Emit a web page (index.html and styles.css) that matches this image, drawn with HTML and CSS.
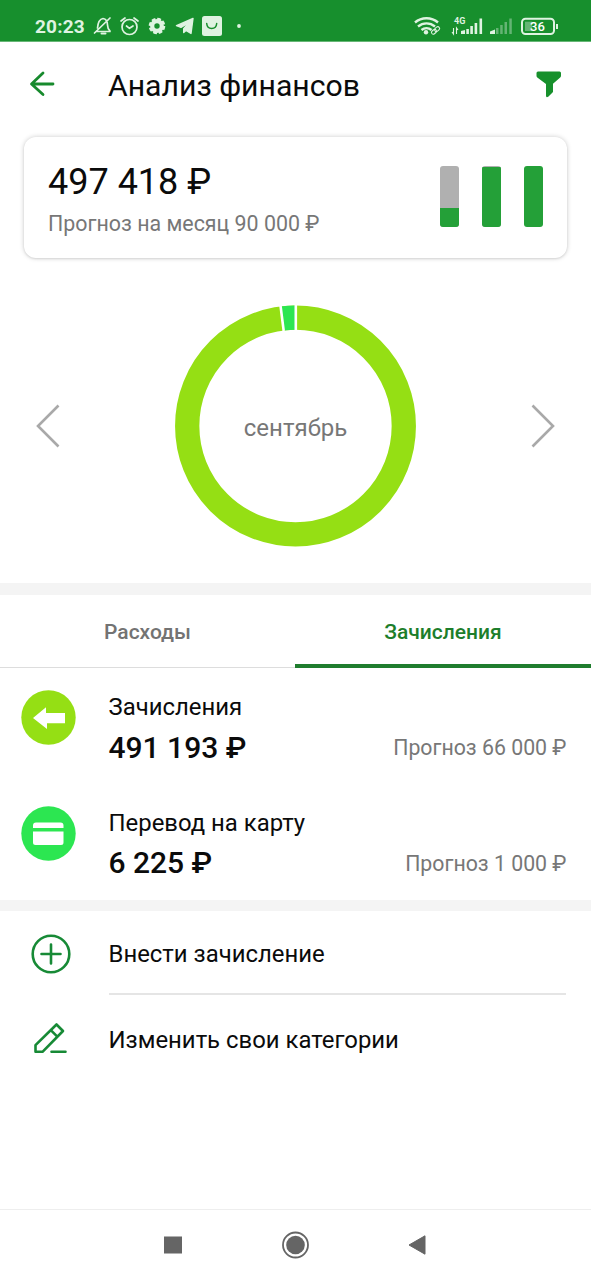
FILE: index.html
```html
<!DOCTYPE html>
<html lang="ru">
<head>
<meta charset="utf-8">
<title>Анализ финансов</title>
<link rel="stylesheet" href="styles.css">
</head>
<body>
<div class="screen">
  <div class="status-bar">
    <span class="clock">20:23</span>
    <svg class="status-left" width="156" height="26" viewBox="90 13 156 26" fill="none" stroke="#dff3e1" stroke-width="1.7" stroke-linecap="round" stroke-linejoin="round">
      <path d="M96.500 31.500h13.500M97.500 28c.5-6 2-9 5.500-9.500 3.500.5 4.500 3 4.500 6.500 0 3 .5 4 2.500 6M94.500 33L110 18"/>
      <path d="M101.500 33.600h4" stroke-width="2"/>
      <circle cx="129.500" cy="27" r="7.500"/>
      <path d="M121 21l4-3M138 21l-4-3M126.500 26l3 2.300 3.500-2.300"/>
      <circle cx="157" cy="26" r="4.800" stroke-width="4.200"/>
      <circle cx="157" cy="26" r="7" stroke-width="2.600" stroke-linecap="butt" stroke-dasharray="3.700 1.798"/>
      <path d="M193 18.500L176.500 25.700l4.500 1.700 8.500-5.200-5.800 6.400v4l2.300-2.200 5 3z" fill="#dff3e1" stroke-width="1.400"/>
      <rect x="202" y="16" width="20" height="20" rx="2.500" fill="#dff3e1" stroke="none"/>
      <path d="M206.700 23.500c.5 6.500 9.500 6.500 10 0" stroke="#178f2d" stroke-width="1.500"/>
      <circle cx="239" cy="26" r="1.900" fill="#dff3e1" stroke="none"/>
    </svg>
    <svg class="status-right" width="150" height="26" viewBox="411 13 150 26" fill="none" stroke="#dff3e1">
      <path d="M415 22.500c6.500-5.700 16.500-5.700 23 0M418 26.500c5-4.200 12-4.200 17 0M421.500 30c3-2.500 7-2.500 10 0" stroke-width="2.400"/>
      <circle cx="426" cy="32.300" r="2.200" fill="#dff3e1" stroke="none"/>
      <g transform="rotate(-40 435.500 30.500)" stroke-width="1.100"><rect x="430.800" y="28.700" width="5.500" height="3.600" rx="1.800"/><rect x="434.800" y="28.700" width="5.500" height="3.600" rx="1.800"/></g>
      <text class="network" x="454" y="23.500">4G</text>
      <path d="M453.500 28v6l-1.500-2M456.500 34v-6l1.500 2" stroke-width="1.100"/>
      <path d="M461 34v-3l4-1v4zM466.300 34v-5h2.600v5zM470.300 34v-8h2.600v8zM474.600 34V23h2.600v11zM479.500 34V18.500h2.600V34z" fill="#dff3e1" stroke="none"/>
      <path d="M490 34v-2.500l5-2V34z" fill="#dff3e1" stroke="none"/>
      <path d="M496 34v-6h2.500v6zM500.200 34v-9h2.500v9zM504.500 34V22h2.500v12zM509.300 34V18.500h2.500V34z" fill="#65b474" stroke="none"/>
      <rect x="522" y="18.800" width="32" height="15.200" rx="3.500" stroke-width="2"/>
      <rect x="525" y="21.700" width="7" height="9.300" fill="#65b474" stroke="none"/>
      <text class="battery-level" x="530" y="31.200">36</text>
      <path d="M557 24v5" stroke-width="2"/>
    </svg>
  </div>

  <header class="app-bar">
    <svg class="back" width="28" height="28" viewBox="28 71 28 28" fill="none" stroke="#178a2d" stroke-width="2.800" stroke-linecap="round" stroke-linejoin="round"><path d="M43 73L31.500 84 43 94.500M32 84h21"/></svg>
    <h1 class="title">Анализ финансов</h1>
    <svg class="filter" width="26" height="27" viewBox="536 71 26 27" fill="#17902c"><path d="M538 71.500h21.500q1.500 0 1.500 1.500v2.800q0 1-.8 1.700l-7.200 6.300v8.200l-4.500 4.600q-2.500 1.600-2.500-.8V84l-8.700-6.500q-.8-.7-.8-1.700V73q0-1.500 1.500-1.500z"/></svg>
  </header>

  <section class="summary">
    <div class="summary-text">
      <div class="summary-amount">497 418 ₽</div>
      <div class="summary-forecast">Прогноз на месяц 90 000 ₽</div>
    </div>
    <div class="bars">
      <div class="bar"><i class="fill" style="height:31%"></i></div>
      <div class="bar"><i class="fill" style="height:98%"></i></div>
      <div class="bar"><i class="fill" style="height:100%"></i></div>
    </div>
  </section>

  <section class="chart">
    <svg width="24" height="44" viewBox="0 0 24 44" fill="none" stroke="#a9a9a9" stroke-width="2.600"><path d="M22.500 1.500L2 22l20.500 20.500"/></svg>
    <svg class="donut" width="242" height="242" viewBox="-120.500 -121 242 242">
      <circle r="108.300" fill="none" stroke="#95df14" stroke-width="24.300"/>
      <path d="M-13.500-107.460A108.300 108.300 0 0 1 0-108.300" fill="none" stroke="#2ce651" stroke-width="24.300"/>
      <path d="M.3-95v-27M-11.800-95L-15.200-122" stroke="#fff" stroke-width="2.600"/>
      <text class="month" x="0" y="9.500" text-anchor="middle">сентябрь</text>
    </svg>
    <svg width="24" height="44" viewBox="0 0 24 44" fill="none" stroke="#a9a9a9" stroke-width="2.600"><path d="M1.500 1.500L22 22 1.500 42.500"/></svg>
  </section>

  <nav class="tabs">
    <div class="tab">Расходы</div>
    <div class="tab tab-active">Зачисления</div>
  </nav>

  <section class="categories">
    <div class="category">
      <svg class="category-icon" width="55" height="55" viewBox="21 690 55 55"><circle cx="48.500" cy="717.500" r="27.200" fill="#95df14"/><path d="M33 718l13-10.800v5.800h19v10.200H47v5.800z" fill="#fff"/></svg>
      <div class="category-text">
        <div class="name">Зачисления</div>
        <div class="amounts"><b class="amount">491 193 ₽</b><span class="forecast">Прогноз 66 000 ₽</span></div>
      </div>
    </div>
    <div class="category">
      <svg class="category-icon" width="55" height="55" viewBox="21 805.500 55 55"><circle cx="48.500" cy="833" r="27.200" fill="#2ce651"/><path d="M33 827.500v-2.500q0-3 3-3h24.500q3 0 3 3v2.500zM33 831h30.500v11q0 2.500-2.500 2.500H35.500q-2.500 0-2.500-2.500z" fill="#fff"/></svg>
      <div class="category-text">
        <div class="name">Перевод на карту</div>
        <div class="amounts"><b class="amount">6 225 ₽</b><span class="forecast">Прогноз 1 000 ₽</span></div>
      </div>
    </div>
  </section>

  <section class="actions">
    <div class="action">
      <svg width="40" height="40" viewBox="0 0 40 40" fill="none" stroke="#178a36" stroke-width="2.600" stroke-linecap="round"><circle cx="20" cy="20" r="18.300"/><path d="M10.500 20h19M20 10.500v19"/></svg>
      <div class="action-label">Внести зачисление</div>
    </div>
    <div class="action">
      <svg width="40" height="40" viewBox="31 1019.500 40 40" fill="none" stroke="#178a36" stroke-width="2.600" stroke-linejoin="round" stroke-linecap="round"><path d="M56.500 1025l6.500 6.500-20.500 20.800h-7v-6.700zM50.800 1030.700l6.500 6.500M51.500 1052.300h14"/></svg>
      <div class="action-label">Изменить свои категории</div>
    </div>
  </section>

  <div class="system-nav">
    <svg width="18" height="18" viewBox="0 0 18 18"><rect y="0.500" width="18" height="17" fill="#656565"/></svg>
    <svg width="28" height="28" viewBox="-14.500 -14 28 28"><circle r="12.500" fill="none" stroke="#656565" stroke-width="1.800"/><circle r="9.300" fill="#656565"/></svg>
    <svg width="18" height="20" viewBox="0 0 18 20"><path d="M1 10L17 .8v18.400z" fill="#656565" stroke="#656565"/></svg>
  </div>
</div>
</body>
</html>
```
FILE: styles.css
```css
* { box-sizing: border-box; }
body { margin: 0; background: #fff; color: #0b0b0b; font-family: Roboto, "Noto Sans", sans-serif; }
svg { display: block; flex: none; }
.screen { width: 591px; height: 1280px; display: flex; flex-direction: column; overflow: hidden; }

.status-bar { height: 42px; flex: none; display: flex; align-items: center; padding: 10px 30px 0 35px; background: #178f2d; border-bottom: 1px solid #67b776; }
.clock { width: 55px; padding-top: 2px; font-size: 19px; line-height: 24px; font-weight: 700; color: #dff3e1; letter-spacing: 0.2px; }
.status-right { margin-left: auto; }
.network { font-size: 9px; font-weight: 700; fill: #dff3e1; stroke: none; }
.battery-level { font-size: 13px; font-weight: 500; fill: #fff; stroke: none; }

.app-bar { height: 95px; flex: none; display: flex; align-items: center; padding: 0 29px 10px 28px; }
.title { margin: 3px 0 0 52px; font-size: 30.200px; line-height: 36px; font-weight: 400; }
.filter { margin-left: auto; }

.summary { height: 121px; flex: none; margin: 0 24px; padding: 0 24px; display: flex; justify-content: space-between; align-items: center; border-radius: 12px; box-shadow: 0 0 5px rgba(0, 0, 0, .2), 0 1px 2px rgba(0, 0, 0, .08); }
.summary-text { padding-top: 4px; }
.summary-amount { font-size: 36px; line-height: 42px; }
.summary-forecast { margin-top: 6px; font-size: 21.400px; line-height: 30px; color: #777; }
.bars { display: flex; gap: 23px; }
.bar { width: 19px; height: 61px; margin-top: -3px; display: flex; align-items: flex-end; background: #b0b0b0; border-radius: 3px; overflow: hidden; }
.fill { width: 100%; background: #24a038; }

.chart { height: 325px; flex: none; display: flex; align-items: center; justify-content: space-between; padding: 11px 36px 0; }
.month { font-size: 24px; fill: #777; }

.tabs { height: 85px; flex: none; display: flex; border-top: 12px solid #f4f4f4; box-shadow: inset 0 -1px #ddd; }
.tab { width: 295px; padding-top: 25px; text-align: center; font-size: 21px; line-height: 24px; font-weight: 500; color: #737373; }
.tab-active { width: 296px; color: #1d7e2b; border-bottom: 4px solid #1f7d2e; }

.categories { height: 232px; flex: none; padding: 22px 24.500px 0 21px; display: flex; flex-direction: column; gap: 45.500px; }
.category { height: 70px; display: flex; gap: 32.500px; }
.category-text { flex: 1; margin-top: 3px; }
.name { font-size: 23.900px; line-height: 28px; }
.amounts { display: flex; align-items: center; justify-content: space-between; margin-top: 8px; line-height: 36px; }
.amount { font-size: 30px; font-weight: 500; }
.forecast { padding-top: 1px; font-size: 21.300px; color: #777; }

.actions { height: 309px; flex: none; border-top: 11px solid #f4f4f4; padding-left: 31px; }
.action { height: 86px; display: flex; align-items: center; gap: 37.500px; }
.action:first-child .action-label { border-bottom: 2px solid #e5e5e5; }
.action:first-child { height: 85px; }
.action-label { width: 457px; height: 83px; padding-top: 2px; display: flex; align-items: center; font-size: 23.900px; }

.system-nav { height: 71px; flex: none; border-top: 1px solid #eee; display: flex; align-items: center; justify-content: space-between; padding: 0 165px 0 164px; }
```
